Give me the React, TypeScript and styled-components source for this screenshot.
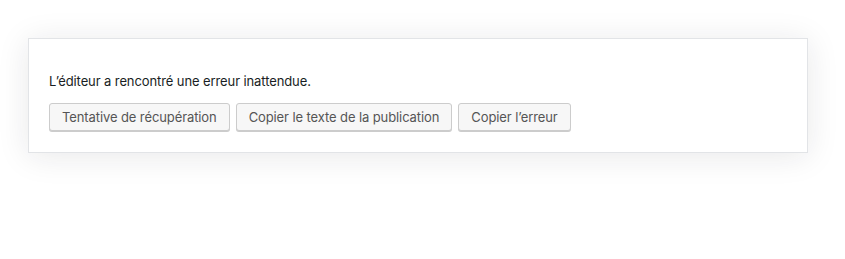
import React from "react";
import styled, { createGlobalStyle } from "styled-components";

const Global = createGlobalStyle`
  html, body { margin: 0; padding: 0; background: #fff; }
  body { font-family: Inter, "Noto Sans", sans-serif; }
`;

const Page = styled.div`
  box-sizing: border-box;
  min-height: 259px;
  padding: 38px 0 40px 28px;
`;

const Warning = styled.div`
  box-sizing: border-box;
  width: 780px;
  padding: 20px 20px 21px;
  background: #fff;
  border: 1px solid #e2e4e7;
  box-shadow: 0 3px 30px rgba(25, 30, 35, 0.1);
`;

const Message = styled.p`
  margin: 13px 0;
  font-size: 13px;
  line-height: 1.4;
  letter-spacing: -0.1px;
  color: #191e23;
`;

const Actions = styled.div`
  display: flex;
  gap: 6px;
`;

const Button = styled.button`
  box-sizing: border-box;
  height: 28px;
  padding: 0 12px 2px;
  font-family: inherit;
  font-size: 13px;
  letter-spacing: -0.1px;
  line-height: 26px;
  color: #555;
  background: #f7f7f7;
  border: 1px solid #ccc;
  border-radius: 3px;
  box-shadow: 0 1px 0 #ccc;
  white-space: nowrap;
  cursor: pointer;
`;

export default function App() {
  return (
    <>
      <Global />
      <Page>
        <Warning>
          <Message>L’éditeur a rencontré une erreur inattendue.</Message>
          <Actions>
            <Button>Tentative de récupération</Button>
            <Button>Copier le texte de la publication</Button>
            <Button>Copier l’erreur</Button>
          </Actions>
        </Warning>
      </Page>
    </>
  );
}
